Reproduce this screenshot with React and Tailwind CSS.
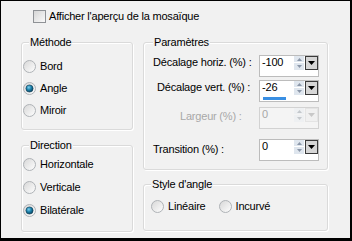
import React from "react";

function Radio({ checked }) {
  return (
    <svg width="13" height="13" viewBox="0 0 13 13" className="shrink-0">
      <defs>
        <linearGradient id="rg" x1="0" y1="0" x2="1" y2="1">
          <stop offset="0" stopColor="#d6d6d6" />
          <stop offset="1" stopColor="#ffffff" />
        </linearGradient>
        <radialGradient id="dot" cx="0.4" cy="0.35" r="0.7">
          <stop offset="0" stopColor="#7fd0f0" />
          <stop offset="0.5" stopColor="#1a7fa8" />
          <stop offset="1" stopColor="#0a3e5a" />
        </radialGradient>
      </defs>
      <circle cx="6.5" cy="6.5" r="6" fill="url(#rg)" stroke="#aeb2b6" strokeWidth="1" />
      {checked && <circle cx="6.5" cy="6.5" r="3.6" fill="url(#dot)" stroke="#0d3b52" strokeWidth="0.6" />}
    </svg>
  );
}

function Checkbox() {
  return (
    <svg width="13" height="13" viewBox="0 0 13 13" className="shrink-0">
      <defs>
        <linearGradient id="cg" x1="0" y1="0" x2="1" y2="1">
          <stop offset="0" stopColor="#d4d4d4" />
          <stop offset="1" stopColor="#fbfbfb" />
        </linearGradient>
      </defs>
      <rect x="0.5" y="0.5" width="12" height="12" fill="url(#cg)" stroke="#8f9296" />
    </svg>
  );
}

function Group({ title, className, titleLeft = "left-[7px]", children }) {
  return (
    <div className={`relative rounded-[3px] border border-[#dadada] shadow-[inset_1px_1px_0_#ffffff,1px_1px_0_#ffffff] ${className}`}>
      <span className={`absolute top-[-7px] ${titleLeft} bg-[#f1f1f1] px-[1px] leading-[13px]`}>{title}</span>
      {children}
    </div>
  );
}

function Spin({ value, disabled, bar }) {
  const arrow = disabled ? "#c4c8cc" : "#8a96a8";
  return (
    <div
      className={`relative flex h-[22px] w-[60px] shrink-0 border ${
        disabled ? "border-[#d2d2d2] bg-[#f4f4f4]" : "border-[#bcbcbc] bg-white"
      }`}
    >
      <span className={`w-[34px] pl-[2px] leading-[13px] ${disabled ? "text-[#a8a8a8]" : "text-black"}`}>{value}</span>
      <div className="flex h-[14px] w-[10px] flex-col gap-[1px]">
        <div className={`flex h-[6px] items-center justify-center ${disabled ? "bg-[#eef0f2]" : "bg-[#dfe6ee]"}`}>
          <svg width="5" height="3" viewBox="0 0 5 3">
            <path d="M0 3 L2.5 0 L5 3 Z" fill={arrow} />
          </svg>
        </div>
        <div className={`flex h-[7px] items-center justify-center ${disabled ? "bg-[#eef0f2]" : "bg-[#dfe6ee]"}`}>
          <svg width="5" height="3" viewBox="0 0 5 3">
            <path d="M0 0 L2.5 3 L5 0 Z" fill={arrow} />
          </svg>
        </div>
      </div>
      <div
        className={`ml-[1px] flex h-[14px] w-[13px] items-center justify-center ${
          disabled ? "border border-[#e4e4e4] bg-[#f0f0f0]" : "border border-[#3a3a3a] bg-[#d6d6d6]"
        }`}
      >
        <svg width="7" height="4" viewBox="0 0 7 4">
          <path d="M0 0 L3.5 4 L7 0 Z" fill={disabled ? "#c8c8c8" : "#000"} />
        </svg>
      </div>
      {bar && <div className="absolute bottom-[1px] left-[3px] h-[3px] w-[23px] bg-[#3a8fe3]" />}
    </div>
  );
}

function RadioRow({ label, checked, className = "" }) {
  return (
    <div className={`flex items-center ${className}`}>
      <Radio checked={checked} />
      <span className="ml-[4px] leading-[13px]">{label}</span>
    </div>
  );
}

export default function App() {
  return (
    <div className="relative h-[241px] w-[352px] overflow-hidden border-t border-l border-r-2 border-b-[3px] border-black bg-[#f1f1f1] font-['Liberation_Sans',Arial,sans-serif] text-[11px] tracking-[-0.2px] text-black">
      <div className="flex items-center pl-[32px] pt-[9px]">
        <Checkbox />
        <span className="ml-[3px] leading-[13px]">Afficher l'aperçu de la mosaïque</span>
      </div>

      <div className="mt-[19px] flex gap-[10px] pl-[20px]">
        <div className="flex w-[112px] flex-col">
          <Group title="Méthode" className="h-[88px]">
            <div className="flex flex-col pl-[1px] pt-[12px]">
              <RadioRow label="Bord" className="h-[22px]" />
              <RadioRow label="Angle" checked className="h-[22px]" />
              <RadioRow label="Miroir" className="h-[22px]" />
            </div>
          </Group>
          <Group title="Direction" className="mt-[15px] h-[87px]">
            <div className="flex flex-col pl-[1px] pt-[7px]">
              <RadioRow label="Horizontale" className="h-[23px]" />
              <RadioRow label="Verticale" className="h-[23px]" />
              <RadioRow label="Bilatérale" checked className="h-[23px]" />
            </div>
          </Group>
        </div>

        <div className="flex w-[185px] flex-col">
          <Group title="Paramètres" titleLeft="left-[9px]" className="h-[128px]">
            <div className="flex flex-col pl-[9px] pr-[8px] pt-[12px]">
              <div className="flex items-start justify-between">
                <span className="mt-[1px] leading-[13px]">Décalage horiz. (%) :</span>
                <Spin value="-100" />
              </div>
              <div className="mt-[3px] flex items-start justify-between">
                <span className="ml-[4px] mt-[1px] leading-[13px]">Décalage vert. (%) :</span>
                <Spin value="-26" bar />
              </div>
              <div className="mt-[5px] flex items-start justify-between">
                <span className="ml-[27px] mt-[3px] leading-[13px] text-[#a8a8a8]">Largeur (%) :</span>
                <Spin value="0" disabled />
              </div>
              <div className="mt-[10px] flex items-start justify-between">
                <span className="mt-[4px] leading-[13px]">Transition (%) :</span>
                <Spin value="0" />
              </div>
            </div>
          </Group>
          <Group title="Style d'angle" className="mt-[14px] h-[47px]">
            <div className="flex items-center pl-[7px] pt-[15px]">
              <RadioRow label="Linéaire" />
              <RadioRow label="Incurvé" className="ml-[13px]" />
            </div>
          </Group>
        </div>
      </div>
    </div>
  );
}
